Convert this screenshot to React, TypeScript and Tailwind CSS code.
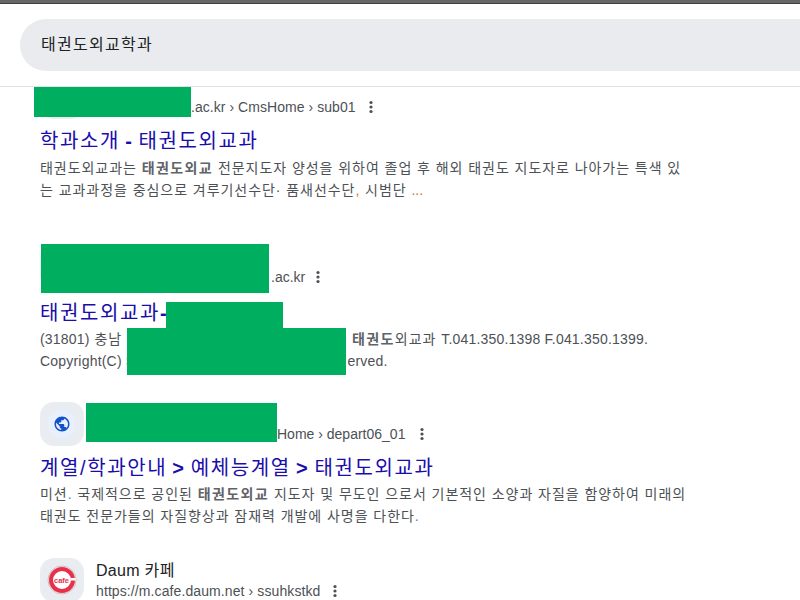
const Dots = () => (
  <svg width="16" height="16" viewBox="0 0 16 16" className="shrink-0 fill-[#4d5156]">
    <circle cx="8" cy="3.5" r="1.6" />
    <circle cx="8" cy="8" r="1.6" />
    <circle cx="8" cy="12.5" r="1.6" />
  </svg>
);

const GlobeIcon = () => (
  <div className="flex h-[44px] w-[44px] shrink-0 items-center justify-center rounded-[14px] bg-[#e9ecf1]">
    <div className="flex h-[28px] w-[28px] items-center justify-center rounded-full bg-[#e8f0fe]">
      <svg width="18" height="18" viewBox="0 0 24 24" className="fill-[#1552c9]">
        <path d="M12 2C6.48 2 2 6.48 2 12s4.48 10 10 10 10-4.48 10-10S17.52 2 12 2zm-1 17.93c-3.95-.49-7-3.85-7-7.93 0-.62.08-1.21.21-1.79L9 15v1c0 1.1.9 2 2 2v1.93zm6.9-2.54c-.26-.81-1-1.39-1.9-1.39h-1v-3c0-.55-.45-1-1-1H8v-2h2c.55 0 1-.45 1-1V7h2c1.1 0 2-.9 2-2v-.41c2.93 1.19 5 4.06 5 7.41 0 2.08-.8 3.97-2.1 5.39z" />
      </svg>
    </div>
  </div>
);

const CafeIcon = () => (
  <div className="flex h-[44px] w-[44px] shrink-0 items-center justify-center rounded-[14px] bg-[#e9ecf1]">
    <svg width="30" height="30" viewBox="0 0 30 30">
      <circle cx="15" cy="15" r="14" fill="#fbeef0" stroke="#cdbfc2" strokeWidth="1" />
      <circle cx="15" cy="15" r="11" fill="#ffffff" stroke="#e8304a" strokeWidth="4" />
      <rect x="24" y="13" width="4.5" height="2.5" fill="#ffffff" />
      <text x="14.5" y="17.5" textAnchor="middle" fontSize="7.5" fontWeight="700" fill="#e8304a" fontFamily="Liberation Sans, sans-serif">
        cafe
      </text>
    </svg>
  </div>
);

const Blank = () => <div className="h-[44px] w-[44px] shrink-0 rounded-[14px] bg-[#e9ecf1]" />;

const Redact = ({ className }: { className: string }) => (
  <div className={`absolute z-[1] bg-[#00ae5f] ${className}`} />
);

const Title = ({ children, className = "" }: { children: React.ReactNode; className?: string }) => (
  <h3 className={`h-[26px] whitespace-nowrap text-[20px] leading-[26px] tracking-[1.6px] [word-spacing:-2px] text-[#1a0dab] ${className}`}>
    {children}
  </h3>
);

const Line = ({ children }: { children: React.ReactNode }) => (
  <p className="h-[22px] whitespace-nowrap text-[14px] leading-[22px] tracking-[0.95px] text-[#4d5156]">{children}</p>
);

const Em = ({ children }: { children: React.ReactNode }) => (
  <b className="font-bold tracking-[1.4px] text-[#5f6368]">{children}</b>
);

// latin runs in the snippets sit at normal spacing, only the hangul is spread
const Lat = ({ children }: { children: React.ReactNode }) => <span className="tracking-[0.2px]">{children}</span>;

export default function App() {
  return (
    <div className="flex h-[600px] w-[800px] flex-col overflow-hidden bg-white font-['Liberation_Sans','Noto_Sans_CJK_KR',sans-serif]">
      <header className="relative z-10 h-[87px] shrink-0 border-b border-[#dfe1e5] bg-white">
        <div className="h-[4px] border-b border-[#3f3f3f] bg-[#666666]" />
        <div className="ml-[20px] mt-[15px] flex h-[52px] items-center rounded-l-[26px] bg-[#e9ebee] pl-[21px] text-[16px] tracking-[1.3px] text-[#202124]">
          태권도외교학과
        </div>
      </header>

      <main className="-mt-[12px] flex flex-col pl-[40px]">
        <article className="relative">
          <div className="flex h-[44px] items-center gap-[12px]">
            <Blank />
            <div className="flex flex-col">
              <span className="h-[20px]" />
              <div className="flex h-[20px] items-center gap-[7px] whitespace-nowrap pl-[95px] text-[14px] tracking-[0.05px] text-[#4d5156]">
                .ac.kr › CmsHome › sub01 <Dots />
              </div>
            </div>
          </div>
          <Redact className="-left-[6px] top-[12px] h-[30px] w-[157px]" />
          <Title className="mt-[9px]">
            학과소개 <b>-</b> 태권도외교과
          </Title>
          <div className="mt-[3px]">
            <Line>
              태권도외교과는 <Em>태권도외교</Em> 전문지도자 양성을 위하여 졸업 후 해외 태권도 지도자로 나아가는 특색 있
            </Line>
            <Line>
              는 교과과정을 중심으로 겨루기선수단· 품새선수단<span className="text-[#c5761f]">,</span> 시범단{" "}
              <span className="tracking-normal text-[#c5761f]">...</span>
            </Line>
          </div>
        </article>

        <article className="relative mt-[44px]">
          <div className="flex h-[44px] items-center gap-[12px]">
            <Blank />
            <div className="flex flex-col">
              <span className="h-[20px]" />
              <div className="flex h-[20px] items-center gap-[5px] whitespace-nowrap pl-[175px] text-[14px] text-[#4d5156]">
                .ac.kr <Dots />
              </div>
            </div>
          </div>
          <Redact className="left-[1px] -top-[1px] h-[49px] w-[228px]" />
          <Title className="mt-[11px]">
            태권도외교과<b>-</b>
          </Title>
          <Redact className="left-[126px] top-[57px] h-[26px] w-[117px]" />
          <div className="mt-[2px]">
            <Line>
              <Lat>(31801)</Lat> 충남 <span className="inline-block w-[225px]" />
              <Em>태권도</Em>외교과 <Lat>T.041.350.1398 F.041.350.1399.</Lat>
            </Line>
            <Line>
              <Lat>Copyright(C) S</Lat>
              <span className="inline-block w-[212px]" />
              <Lat>erved.</Lat>
            </Line>
          </div>
          <Redact className="left-[87px] top-[83px] h-[47px] w-[219px]" />
        </article>

        <article className="relative mt-[30px]">
          <div className="flex h-[44px] items-center gap-[12px]">
            <GlobeIcon />
            <div className="flex flex-col">
              <span className="h-[20px]" />
              <div className="flex h-[20px] items-center gap-[9px] whitespace-nowrap pl-[181px] text-[14px] text-[#4d5156]">
                Home › depart06_01 <Dots />
              </div>
            </div>
          </div>
          <Redact className="left-[46px] top-[1px] h-[39px] w-[191px]" />
          <Title className="mt-[9px]">
            계열/학과안내 <b>&gt;</b> 예체능계열 <b>&gt;</b> 태권도외교과
          </Title>
          <div className="mt-[2px]">
            <Line>
              미션<span className="text-[#4a7fc0]">.</span> 국제적으로 공인된 <Em>태권도외교</Em> 지도자 및 무도인 으로서 기본적인 소양과 자질을 함양하여 미래의
            </Line>
            <Line>
              태권도 전문가들의 자질향상과 잠재력 개발에 사명을 다한다<span className="text-[#4a7fc0]">.</span>
            </Line>
          </div>
        </article>

        <article className="relative mt-[31px]">
          <div className="flex h-[44px] items-center gap-[12px]">
            <CafeIcon />
            <div className="flex flex-col">
              <span className="h-[22px] whitespace-nowrap pt-[1px] text-[16px] leading-[22px] tracking-[0.3px] text-[#202124]">
                Daum 카페
              </span>
              <div className="flex h-[20px] items-center gap-[6px] whitespace-nowrap text-[14px] tracking-[0.1px] text-[#4d5156]">
                https://m.cafe.daum.net › ssuhkstkd <Dots />
              </div>
            </div>
          </div>
        </article>
      </main>
    </div>
  );
}
